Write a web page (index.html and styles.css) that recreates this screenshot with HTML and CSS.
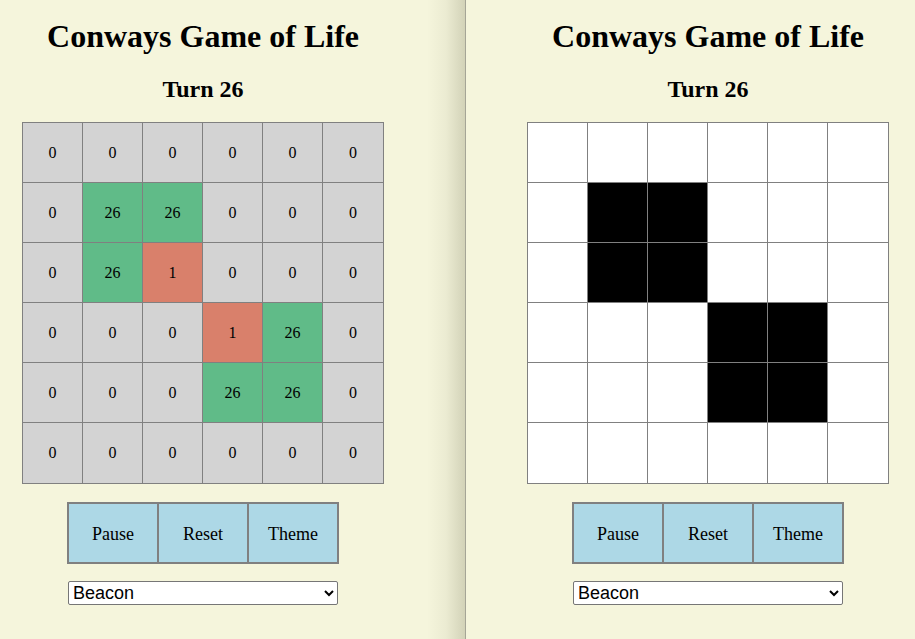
FILE: index.html
```html
<!DOCTYPE html>
<html>
<head>
<meta charset="utf-8">
<link rel="stylesheet" href="styles.css">
</head>
<body>
<div class="split">
  <section class="panel panel-left">
    <div class="column">
      <h1 class="title">Conways Game of Life</h1>
      <h2 class="turn">Turn 26</h2>
      <div class="board board-num">
        <div class="cell">0</div><div class="cell">0</div><div class="cell">0</div><div class="cell">0</div><div class="cell">0</div><div class="cell">0</div>
        <div class="cell">0</div><div class="cell live">26</div><div class="cell live">26</div><div class="cell">0</div><div class="cell">0</div><div class="cell">0</div>
        <div class="cell">0</div><div class="cell live">26</div><div class="cell born">1</div><div class="cell">0</div><div class="cell">0</div><div class="cell">0</div>
        <div class="cell">0</div><div class="cell">0</div><div class="cell">0</div><div class="cell born">1</div><div class="cell live">26</div><div class="cell">0</div>
        <div class="cell">0</div><div class="cell">0</div><div class="cell">0</div><div class="cell live">26</div><div class="cell live">26</div><div class="cell">0</div>
        <div class="cell">0</div><div class="cell">0</div><div class="cell">0</div><div class="cell">0</div><div class="cell">0</div><div class="cell">0</div>
      </div>
      <div class="controls">
        <button class="btn">Pause</button><button class="btn">Reset</button><button class="btn">Theme</button>
      </div>
      <select class="pattern">
        <option>Beacon</option>
        <option>Blinker</option>
        <option>Glider</option>
      </select>
    </div>
  </section>
  <section class="panel panel-right">
    <div class="column">
      <h1 class="title">Conways Game of Life</h1>
      <h2 class="turn">Turn 26</h2>
      <div class="board board-bw">
        <div class="cell"></div><div class="cell"></div><div class="cell"></div><div class="cell"></div><div class="cell"></div><div class="cell"></div>
        <div class="cell"></div><div class="cell on"></div><div class="cell on"></div><div class="cell"></div><div class="cell"></div><div class="cell"></div>
        <div class="cell"></div><div class="cell on"></div><div class="cell on"></div><div class="cell"></div><div class="cell"></div><div class="cell"></div>
        <div class="cell"></div><div class="cell"></div><div class="cell"></div><div class="cell on"></div><div class="cell on"></div><div class="cell"></div>
        <div class="cell"></div><div class="cell"></div><div class="cell"></div><div class="cell on"></div><div class="cell on"></div><div class="cell"></div>
        <div class="cell"></div><div class="cell"></div><div class="cell"></div><div class="cell"></div><div class="cell"></div><div class="cell"></div>
      </div>
      <div class="controls">
        <button class="btn">Pause</button><button class="btn">Reset</button><button class="btn">Theme</button>
      </div>
      <select class="pattern">
        <option>Beacon</option>
        <option>Blinker</option>
        <option>Glider</option>
      </select>
    </div>
  </section>
</div>
</body>
</html>
```

FILE: styles.css
```css
html, body {
  margin: 0;
  padding: 0;
  height: 100%;
  background: #f5f5dc;
  font-family: "Liberation Serif", "Times New Roman", serif;
  color: #000;
}

.split {
  display: flex;
  height: 639px;
  overflow: hidden;
}

.panel {
  position: relative;
  box-sizing: border-box;
  height: 100%;
}

.panel-left {
  width: 466px;
  padding-left: 22px;
  border-right: 1px solid #a5a596;
}

.panel-left::after {
  content: "";
  position: absolute;
  top: 0;
  right: 0;
  bottom: 0;
  width: 38px;
  background: linear-gradient(to right, rgba(120, 120, 90, 0) 0%, rgba(120, 120, 90, 0.08) 50%, rgba(120, 120, 90, 0.28) 100%);
  pointer-events: none;
}

.panel-right {
  flex: 1;
  padding-left: 61px;
}

.column {
  width: 362px;
  display: flex;
  flex-direction: column;
  align-items: center;
  padding-top: 18px;
}

.title {
  margin: 0;
  font-size: 32px;
  font-weight: bold;
  line-height: 36px;
  white-space: nowrap;
}

.turn {
  margin: 21px 0 0;
  font-size: 24px;
  font-weight: bold;
  line-height: 28px;
}

.board {
  margin-top: 19px;
  display: grid;
  grid-template-columns: repeat(5, 59px) 60px;
  grid-template-rows: repeat(5, 59px) 60px;
  gap: 1px;
  padding: 1px;
  background: #808080;
}

.cell {
  display: flex;
  align-items: center;
  justify-content: center;
  font-size: 16px;
  background: #d3d3d3;
}

.board-num .live { background: #60bb88; }
.board-num .born { background: #d9806b; }

.board-bw .cell { background: #ffffff; }
.board-bw .cell.on { background: #000000; }

.controls {
  margin-top: 18px;
  display: flex;
}

.btn {
  box-sizing: border-box;
  width: 92px;
  height: 62px;
  margin: 0;
  padding: 2px 0 0;
  border: 2px solid #808080;
  background: #add8e6;
  font-family: "Liberation Serif", "Times New Roman", serif;
  font-size: 18px;
  color: #000;
}

.btn + .btn {
  margin-left: -2px;
}

.pattern {
  margin-top: 17px;
  width: 270px;
  height: 24px;
  font-family: "Liberation Sans", Arial, sans-serif;
  font-size: 18px;
  background: #fff;
  border: 1px solid #767676;
  border-radius: 2px;
  color: #000;
}
```
